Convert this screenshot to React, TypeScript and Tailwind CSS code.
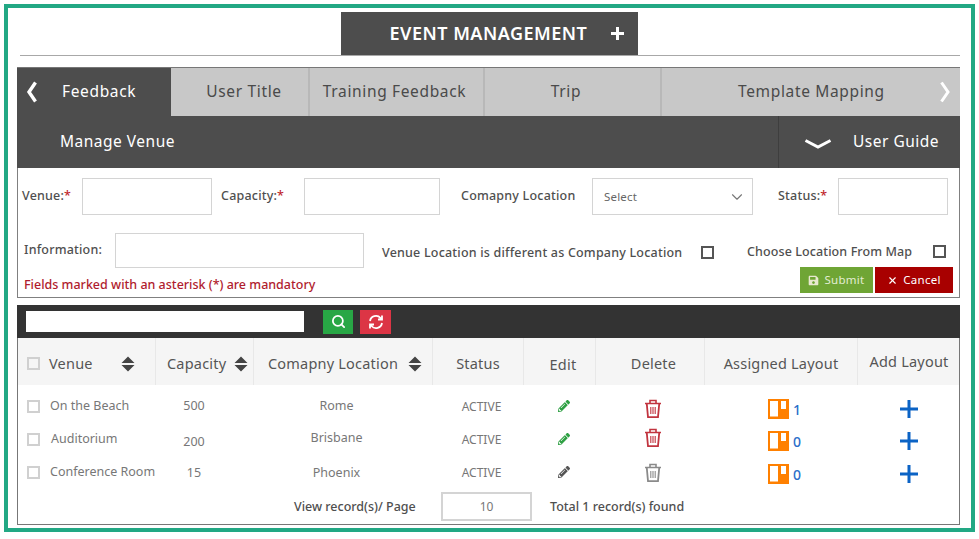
import { ChevronDown, Search, X } from "lucide-react";
import { FaSave, FaPencilAlt } from "react-icons/fa";

const Trash = ({ c }: { c: string }) => (
  <svg width="18" height="20" viewBox="0 0 18 20" fill="none" stroke={c} strokeWidth="1.6">
    <path d="M1 4.5h16M6 4V1.5h6V4" />
    <path d="M2.8 5l1.2 13.2h10L15.2 5" strokeWidth="1.8" />
    <path d="M6.8 8v7M9 8v7M11.2 8v7" strokeWidth="1.1" />
  </svg>
);

const LayoutIcon = () => (
  <svg width="21" height="20" viewBox="0 0 21 20">
    <rect width="21" height="20" fill="#ff8000" />
    <rect x="2" y="2" width="8" height="15.5" fill="#fff" />
    <rect x="13" y="2" width="5" height="8" fill="#fff" />
  </svg>
);

const Sort = () => (
  <svg width="14" height="16" viewBox="0 0 14 16" className="shrink-0">
    <path d="M7 0.5L13.5 7H0.5zM7 15.5L0.5 9h13z" fill="#444" />
  </svg>
);

const Check = ({ c = "border-[#d0d0d0]" }: { c?: string }) => (
  <span className={`block w-[13px] h-[13px] border-2 shrink-0 ${c}`} />
);

const rows = [
  { v: "On the Beach", ind: "", cap: "500", capY: "translate-y-0", loc: "Rome", locY: "translate-y-0", pen: "#2ea043", tr: "#c1343f", trY: "translate-y-[2px]", ly: "translate-y-[2px]", n: "1" },
  { v: "Auditorium", ind: "pl-[1px]", cap: "200", capY: "translate-y-[3px]", loc: "Brisbane", locY: "translate-y-[-1px]", pen: "#2ea043", tr: "#c1343f", trY: "translate-y-[-2px]", ly: "translate-y-[1px]", n: "0" },
  { v: "Conference Room", ind: "", cap: "15", capY: "translate-y-[1px]", loc: "Phoenix", locY: "translate-y-[1px]", pen: "#555555", tr: "#8a8a8a", trY: "translate-y-[0px]", ly: "translate-y-[1px]", n: "0" },
];

export default function App() {
  return (
    <div className="w-[979px] h-[539px] bg-white pt-[4px] pl-[4px] font-['Noto_Sans',sans-serif] text-[#555]">
      <div className="w-[971px] h-[528px] border-4 border-[#22a884] pl-[9px] pr-[11px] pt-[4px]">
        {/* Title */}
        <div className="ml-[3px] h-[44px] border-b border-[#a8a8a8] flex justify-center pr-[2px]">
          <div className="w-[297px] h-[43px] bg-[#4d4d4d] text-white flex items-center pl-[49px] shrink-0">
            <span className="text-[18px] font-semibold tracking-[0.5px] whitespace-nowrap">EVENT MANAGEMENT</span>
            <svg width="13" height="13" viewBox="0 0 13 13" className="ml-[24px]"><path d="M6.5 0v13M0 6.5h13" stroke="#fff" strokeWidth="3" /></svg>
          </div>
        </div>

        {/* Tabs */}
        <div className="mt-[11px] h-[49px] flex bg-[#c8c8c8] border-t border-[#777] text-[15.5px] text-[#4a4a4a] tracking-[0.65px]">
          <div className="w-[154px] bg-[#4d4d4d] text-white flex items-center">
            <svg width="12" height="22" viewBox="0 0 12 22" className="ml-[9px]"><path d="M9.5 1.5L3 11l6.5 9.5" fill="none" stroke="#fff" strokeWidth="3.4" /></svg>
            <span className="ml-[24px]">Feedback</span>
          </div>
          <div className="w-[139px] flex items-center justify-center pl-[9px] border-r-2 border-[#b8b8b8]">User Title</div>
          <div className="w-[175px] flex items-center justify-center pr-[4px] border-r-2 border-[#b8b8b8] whitespace-nowrap">Training Feedback</div>
          <div className="w-[177px] flex items-center justify-center border-r-2 border-[#b8b8b8] pr-[13px]">Trip</div>
          <div className="flex-1 flex items-center relative pl-[76px] whitespace-nowrap">
            Template Mapping
            <svg width="12" height="22" viewBox="0 0 12 22" className="absolute right-[9px] top-[13px]"><path d="M2.5 1.5L9 11l-6.5 9.5" fill="none" stroke="#fff" strokeWidth="3" /></svg>
          </div>
        </div>

        {/* Sub bar */}
        <div className="h-[52px] bg-[#4d4d4d] flex text-white text-[15.5px] tracking-[0.5px]">
          <div className="flex-1 flex items-center pl-[43px]">Manage Venue</div>
          <div className="w-[182px] border-l border-[#3e3e3e] flex items-center">
            <svg width="28" height="10" viewBox="0 0 28 10" className="ml-[25px] mt-[4px]"><path d="M1.5 1.5L14 8l12.5-6.5" fill="none" stroke="#fff" strokeWidth="3" /></svg>
            <span className="ml-[21px]">User Guide</span>
          </div>
        </div>

        {/* Form */}
        <div className="h-[130px] border-x border-b border-[#808080] text-[12.5px] font-medium text-[#4f4f4f] tracking-[0.2px]">
          <div className="flex items-center pt-[10px] pl-[4px]">
            <span className="w-[60px]">Venue:<span className="text-[#c1272d]">*</span></span>
            <div className="w-[130px] h-[37px] border border-[#d4d4d4]" />
            <span className="ml-[9px] w-[83px]">Capacity:<span className="text-[#c1272d]">*</span></span>
            <div className="w-[136px] h-[37px] border border-[#d4d4d4]" />
            <span className="ml-[21px] w-[131px] whitespace-nowrap">Comapny Location</span>
            <div className="w-[161px] h-[37px] border border-[#d4d4d4] flex items-center justify-between pl-[11px] pr-[6px] text-[11.5px] font-normal text-[#666]">
              Select
              <ChevronDown size={18} strokeWidth={1.5} className="text-[#777]" />
            </div>
            <span className="ml-[25px] w-[60px]">Status:<span className="text-[#c1272d]">*</span></span>
            <div className="w-[110px] h-[37px] border border-[#d4d4d4]" />
          </div>
          <div className="flex items-center mt-[18px] pl-[6px]">
            <span className="w-[91px] -mt-[1px]">Information:</span>
            <div className="w-[249px] h-[35px] border border-[#d4d4d4]" />
            <span className="ml-[18px] w-[319px] whitespace-nowrap translate-y-[3px]">Venue Location is different as Company Location</span>
            <span className="translate-y-[2px]"><Check c="border-[#555]" /></span>
            <span className="ml-[33px] w-[186px] whitespace-nowrap tracking-[0.1px] translate-y-[2px]">Choose Location From Map</span>
            <span className="translate-y-[1px]"><Check c="border-[#555]" /></span>
          </div>
          <div className="flex justify-between -mt-[1px] pl-[6px] pr-[6px]">
            <span className="text-[#b01c2e] mt-[9px] text-[12.5px] tracking-normal whitespace-nowrap">Fields marked with an asterisk (*) are mandatory</span>
            <div className="flex gap-[2px] text-[11.5px] font-normal text-white tracking-[0.3px]">
              <div className="w-[73px] h-[26px] bg-[#6fa535] flex items-center justify-center gap-[5px]">
                <FaSave size={11} className="text-[#e8e8d0]" /><span className="text-[#e3edd4]">Submit</span>
              </div>
              <div className="w-[78px] h-[26px] bg-[#a80000] flex items-center justify-center gap-[5px]">
                <X size={11} strokeWidth={2.5} /><span>Cancel</span>
              </div>
            </div>
          </div>
        </div>

        {/* Table */}
        <div className="mt-[7px] h-[220px] border-x border-b border-[#777]">
          <div className="h-[33px] -mx-px bg-[#333333] flex items-center pl-[9px]">
            <div className="w-[278px] h-[21px] bg-white" />
            <div className="ml-[19px] w-[30px] h-[24px] bg-[#28a745] flex items-center justify-center">
              <Search size={15} strokeWidth={2.8} className="text-white" />
            </div>
            <div className="ml-[7px] w-[31px] h-[24px] bg-[#dc3545] flex items-center justify-center">
              <svg width="16" height="16" viewBox="0 0 16 16" fill="none" stroke="#fff" strokeWidth="1.8">
                <path d="M2 7a6 6 0 0 1 10.5-3L14 5.5M14 1.5v4h-4" />
                <path d="M14 9a6 6 0 0 1-10.5 3L2 10.5M2 14.5v-4h4" />
              </svg>
            </div>
          </div>

          <div className="h-[47px] bg-[#f5f5f5] grid grid-cols-[138px_98px_179px_91px_72px_109px_153px_1fr] text-[14.5px] text-[#555] tracking-[0.2px]">
            <div className="flex items-center pl-[9px] pt-[4px] border-r border-[#e8e8e8]">
              <Check /><span className="ml-[9px] w-[36px]">Venue</span>
              <span className="ml-[36px]"><Sort /></span>
            </div>
            <div className="flex items-center pl-[11px] pt-[4px] border-r border-[#e8e8e8]">
              <span>Capacity</span><span className="ml-[8px]"><Sort /></span>
            </div>
            <div className="flex items-center pl-[14px] pt-[4px] border-r border-[#e8e8e8] whitespace-nowrap">
              <span>Comapny Location</span><span className="ml-[10px]"><Sort /></span>
            </div>
            <div className="flex items-center justify-center pt-[4px] border-r border-[#e8e8e8]">Status</div>
            <div className="flex items-center justify-center pl-[7px] pt-[6px] border-r border-[#e8e8e8]">Edit</div>
            <div className="flex items-center justify-center pl-[7px] pt-[4px] border-r border-[#e8e8e8]">Delete</div>
            <div className="flex items-center justify-center pt-[4px] border-r border-[#e8e8e8] whitespace-nowrap">Assigned Layout</div>
            <div className="flex items-center justify-center pl-[1px] pt-[1px] whitespace-nowrap">Add Layout</div>
          </div>

          <div className="pt-[5px]">
            {rows.map((r) => (
              <div key={r.v} className="h-[33px] grid grid-cols-[138px_98px_179px_91px_72px_109px_153px_1fr] items-center text-[12.5px] text-[#777]">
                <div className="flex items-center pl-[9px] whitespace-nowrap">
                  <Check /><span className={`ml-[10px] ${r.ind}`}>{r.v}</span>
                </div>
                <div className={`text-center pr-[22px] ${r.capY}`}>{r.cap}</div>
                <div className={`text-center pr-[14px] ${r.locY}`}>{r.loc}</div>
                <div className="text-center pl-[6px] text-[12px]">ACTIVE</div>
                <div className="flex justify-center pl-[8px] translate-y-[-1px]"><FaPencilAlt size={12} color={r.pen} /></div>
                <div className={`flex justify-center pl-[4px] ${r.trY}`}><Trash c={r.tr} /></div>
                <div className={`flex items-center justify-center pl-[6px] ${r.ly}`}>
                  <LayoutIcon /><span className="ml-[4px] text-[14px] font-medium text-[#2a6fc9] translate-y-[1px]">{r.n}</span>
                </div>
                <div className={`flex justify-center ${r.ly}`}>
                  <svg width="18" height="18" viewBox="0 0 18 18"><path d="M9 0v18M0 9h18" stroke="#0b63c5" strokeWidth="3" /></svg>
                </div>
              </div>
            ))}
          </div>

          <div className="flex items-center mt-[3px] text-[12.5px] font-medium text-[#4f4f4f]">
            <span className="ml-[276px] w-[147px] whitespace-nowrap translate-y-[1px]">View record(s)/ Page</span>
            <div className="w-[91px] h-[29px] border-2 border-[#d4d4d4] flex items-center justify-center text-[12px] font-normal text-[#777]">10</div>
            <span className="ml-[18px] whitespace-nowrap translate-y-[1px]">Total 1 record(s) found</span>
          </div>
        </div>
      </div>
    </div>
  );
}
